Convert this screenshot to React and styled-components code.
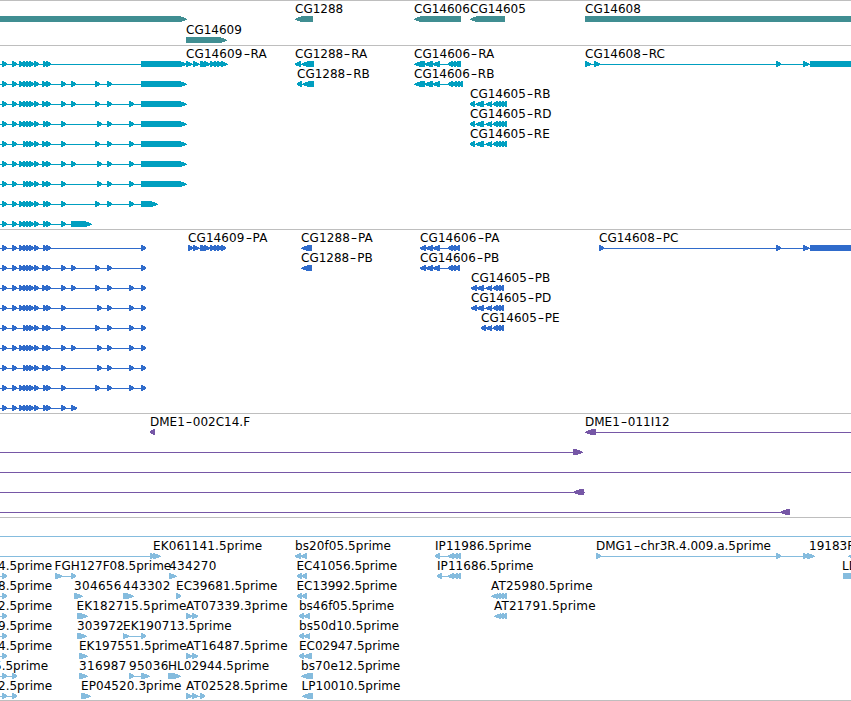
import React from 'react';
import styled, { createGlobalStyle } from 'styled-components';

const GlobalStyle = createGlobalStyle`
  body {
    margin: 0;
    background: #fff;
    overflow: hidden;
  }
`;

const Browser = styled.main`
  width: 851px;
  height: 701px;
  display: flex;
  flex-direction: column;
  overflow: hidden;
  background: #fff;
`;

const TrackBox = styled.section`
  flex: none;
  box-sizing: border-box;
  height: ${(props) => props.$height}px;
  border-top: 1px solid #bebebe;
  color: ${(props) => props.$color};
  overflow: hidden;
`;

const Row = styled.div`
  position: relative;
  height: ${(props) => props.$height}px;
`;

const Glyphs = styled.svg`
  display: block;
  width: 851px;
  height: 100%;
  fill: currentColor;
  shape-rendering: crispEdges;
`;

/* labels sit over the row at their genomic position */
const Label = styled.span`
  position: absolute;
  top: 1px;
  left: ${(props) => props.$x}px;
  color: #000;
  font-family: 'DejaVu Sans', sans-serif;
  font-size: 12px;
  line-height: 14px;
  letter-spacing: ${(props) => props.$spacing}px;
  white-space: nowrap;
`;

const Dash = styled.span`
  display: inline-block;
  width: 8px;
  text-align: center;
  transform: scaleX(1.5);
`;

const TOP = 15;

// how far each of the six pixel rows reaches into the arrow head
const TRIANGLE = [0.3, 0.7, 1, 1, 0.8, 0.4];
const HEAD_OF_BAR = [0, 0.5, 0.8, 1, 0.6, 0.2];

const exonPath = (start, end, reverse) => {
  const head = Math.min(6, end - start);
  const steps = end - start > 6 ? HEAD_OF_BAR : TRIANGLE;
  const dir = reverse ? -1 : 1;
  const from = reverse ? end : start;
  const neck = (reverse ? start : end) - dir * head;
  const edge = steps
    .map((s) => `H${neck + dir * Math.round(s * head)}v1`)
    .join('');
  return `M${from} ${TOP}${edge}H${from}Z`;
};

// f: [label, label x, line, exons, reverse, extra label width]
const Feature = ({ f }) => {
  const [, , line, exons, reverse] = f;
  return (
    <g>
      {line && <rect x={line[0]} y={TOP + 3} width={line[1] - line[0]} height="1" />}
      {exons.map(([start, end]) => (
        <path key={start} d={exonPath(start, end, reverse)} />
      ))}
    </g>
  );
};

const FeatureLabel = ({ f }) => {
  const [head, tail] = f[0].split('-');
  return (
    <Label $x={f[1]} $spacing={(f[5] || 0) / f[0].length}>
      {head}
      {tail && <Dash>-</Dash>}
      {tail}
    </Label>
  );
};

const Track = ({ color, height, rowHeight = 20, rows }) => (
  <TrackBox $color={color} $height={height}>
    {rows.map((features, i) => (
      <Row key={i} $height={rowHeight}>
        <Glyphs overflow="visible">
          {features.map((f, j) => (
            <Feature key={j} f={f} />
          ))}
        </Glyphs>
        {features
          .filter((f) => f[0])
          .map((f) => (
            <FeatureLabel key={f[0]} f={f} />
          ))}
      </Row>
    ))}
  </TrackBox>
);

const small = (...starts) => starts.map((x) => [x, x + 5]);
const HEAD = [2, 12, 19, 23, 26, 29, 34, 43, 46];
const HEAD_B = [2, 12, 19, 23, 26, 29, 34, 42, 46];
const SHORT = [2, 12, 23, 26, 29, 34, 42, 46];

const variants = [
  HEAD,
  [...HEAD_B, 61, 71, 95, 107],
  [...HEAD_B, 61, 71, 95, 107, 129],
  [...HEAD, 61, 97, 107, 129],
  [...SHORT, 61, 95, 107, 129],
  [...HEAD_B, 61, 71, 97, 107, 129],
  [...SHORT, 61, 97, 107, 129],
  [...HEAD, 61, 95, 107, 129],
  [...HEAD, 61],
];

const transcript = (i) => {
  const last = i === 8 ? [71, 92] : i === 7 ? [141, 158] : [141, 187];
  return ['', 0, [0, last[0]], [...small(...variants[i]), last]];
};

const protein = (i) => {
  const last = i === 8 ? [71, 77] : [141, 146];
  return ['', 0, [0, last[0]], [...small(...variants[i]), last]];
};

const genes = [
  [
    ['', 0, null, [[-10, 187]]],
    ['CG1288', 295, null, [[295, 313]], true],
    ['CG14606', 414, null, [[414, 461]], true],
    ['CG14605', 470, null, [[470, 505]], true],
    ['CG14608', 585, null, [[585, 900]]],
  ],
  [['CG14609', 186, null, [[186, 227]]]],
];

const rb05 = [[470, 475], [475, 484], [485, 492], [493, 498], [496, 501], [499, 504], [502, 507]];

const transcripts = [
  [
    transcript(0),
    ['CG14609-RA', 186, [186, 228], [[186, 192], [193, 199], [200, 209], [204, 210], [210, 215], [214, 219], [217, 222], [221, 227]], false, 1],
    ['CG1288-RA', 295, null, [[295, 301], [301, 314]], true],
    ['CG14606-RA', 414, [414, 461], [[414, 425], [424, 433], [432, 440], [448, 453], [451, 456], [454, 459], [456, 461]], true, 0.5],
    ['CG14608-RC', 585, [585, 811], [[585, 591], [594, 600], [776, 781], [803, 809], [810, 900]]],
  ],
  [
    transcript(1),
    ['CG1288-RB', 297, null, [[297, 302], [302, 314]], true],
    ['CG14606-RB', 414, [414, 463], [[414, 425], [424, 433], [432, 440], [448, 453], [452, 457], [455, 460], [458, 463]], true],
  ],
  [transcript(2), ['CG14605-RB', 470, [470, 507], rb05, true]],
  [transcript(3), ['CG14605-RD', 470, [470, 507], rb05, true]],
  [transcript(4), ['CG14605-RE', 470, [470, 507], rb05, true]],
  [transcript(5)],
  [transcript(6)],
  [transcript(7)],
  [transcript(8)],
];

const pa06 = [[420, 426], [425, 433], [432, 440], [448, 453], [451, 456], [455, 460]];
const pb05 = [[471, 477], [476, 484], [485, 492], [493, 498], [496, 501], [499, 504]];

const proteins = [
  [
    protein(0),
    ['CG14609-PA', 188, [188, 226], [[188, 193], [193, 199], [200, 209], [204, 210], [210, 215], [214, 219], [217, 222], [221, 226]], false, 1],
    ['CG1288-PA', 301, null, [[301, 312]], true, 1],
    ['CG14606-PA', 420, [420, 460], pa06, true, 1],
    ['CG14608-PC', 599, [599, 811], [[599, 604], [776, 781], [803, 809], [810, 900]]],
  ],
  [
    protein(1),
    ['CG1288-PB', 301, null, [[301, 312]], true],
    ['CG14606-PB', 420, [420, 460], pa06, true],
  ],
  [protein(2), ['CG14605-PB', 471, [471, 504], pb05, true]],
  [protein(3), ['CG14605-PD', 471, [471, 504], pb05, true]],
  [protein(4), ['CG14605-PE', 481, [481, 504], [[481, 486], ...pb05.slice(2)], true]],
  [protein(5)],
  [protein(6)],
  [protein(7)],
  [protein(8)],
];

const clones = [
  [
    ['DME1-002C14.F', 150, null, [[150, 155]], true],
    ['DME1-011I12', 585, [590, 851], [[585, 596]], true],
  ],
  [['', 0, [0, 575], [[573, 583]]]],
  [['', 0, [0, 851], []]],
  [['', 0, [0, 585], [[573, 584]], true]],
  [['', 0, [0, 781], [[780, 790]], true]],
];

const ip = [[448, 454], [452, 458], [456, 461]];

const ests = [
  [['', 0, [0, 851], []]],
  [
    ['EK061141.5prime', 153, [0, 152], [[150, 155], [153, 161]], false, 1.5],
    ['bs20f05.5prime', 295, null, [[295, 301], [301, 307]], true, 1],
    ['IP11986.5prime', 435, [435, 461], [[435, 440], ...ip], true, 1],
    ['DMG1-chr3R.4.009.a.5prime', 596, [596, 815], [[596, 601], [776, 781], [803, 808], [807, 815]]],
    ['19183F11.5prime', 809, null, [[848, 860]], true],
  ],
  [
    ['4.5prime', -2, [0, 3], [[2, 7]]],
    ['FGH127F08.5prime', 54.5, [55, 73], [[55, 63], [71, 76]]],
    ['434270', 169, null, [[169, 177]], false, 2],
    ['EC41056.5prime', 296.5, null, [[297, 302], [302, 307]], true],
    ['IP11686.5prime', 437, [437, 461], [[437, 442], ...ip], true, 1],
    ['LD18186.5prime', 842, null, [[843, 870]]],
  ],
  [
    ['8.5prime', -2, [0, 3], [[2, 7]]],
    ['304656', 74, null, [[74, 83]], false, 2],
    ['443302', 123, null, [[123, 134]], false, 2],
    ['EC39681.5prime', 176, null, [[176, 181]], false, 1],
    ['EC13992.5prime', 296.5, null, [[297, 302], [302, 307]], true],
    ['AT25980.5prime', 491, null, [[491, 498], [496, 501], [499, 504], [502, 507]], true, 2.5],
  ],
  [
    ['2.5prime', -2, [0, 3], [[2, 7]]],
    ['EK182715.5prime', 76.5, null, [[77, 88]], false, 2.5],
    ['AT07339.3prime', 186, null, [[186, 192], [192, 198]], false, 2.5],
    ['bs46f05.5prime', 299, null, [[299, 304], [304, 310]], true],
    ['AT21791.5prime', 494, null, [[494, 501], [499, 504], [502, 507]], true, 2.5],
  ],
  [
    ['9.5prime', -2, [0, 3], [[2, 7]]],
    ['303972', 77, null, [[77, 87]], false, 1],
    ['EK190713.5prime', 123, [123, 143], [[123, 130], [141, 146]], false, 1],
    ['bs50d10.5prime', 299, null, [[299, 304], [303, 310]], true, 1.5],
  ],
  [
    ['4.5prime', -2, [0, 3], [[2, 7]]],
    ['EK197551.5prime', 79, null, [[79, 88]]],
    ['AT16487.5prime', 186, null, [[186, 192], [192, 198]], false, 2.5],
    ['EC02947.5prime', 299, null, [[299, 304], [303, 312]], true],
  ],
  [
    ['5.5prime', -6, [0, 14], [[2, 7], [12, 17]]],
    ['316987', 79, null, [[79, 88]], false, 2],
    ['95036', 129, [129, 143], [[129, 134], [141, 150]], false, 1.5],
    ['HL02944.5prime', 168, null, [[168, 181]], false, 1],
    ['bs70e12.5prime', 301, null, [[301, 313]], true, 1],
  ],
  [
    ['2.5prime', -2, [0, 14], [[2, 7], [12, 17]]],
    ['EP04520.3prime', 81, null, [[81, 91]], false, 1],
    ['AT02528.5prime', 186, [186, 205], [[186, 192], [192, 198], [200, 205]], false, 2.5],
    ['LP10010.5prime', 301.5, null, [[302, 313]], true, 0.5],
  ],
];

const App = () => {
  return (
    <>
      <GlobalStyle />
      <Browser>
        <Track color='#408e92' height={45} rowHeight={21} rows={genes} />
        <Track color='#009fc0' height={184} rows={transcripts} />
        <Track color='#2f6bcb' height={184} rows={proteins} />
        <Track color='#7657a6' height={104} rows={clones} />
        <Track color='#85bcde' height={183} rows={ests} />
        <Track color='#85bcde' height={1} rows={[]} />
      </Browser>
    </>
  );
};

export default App;
